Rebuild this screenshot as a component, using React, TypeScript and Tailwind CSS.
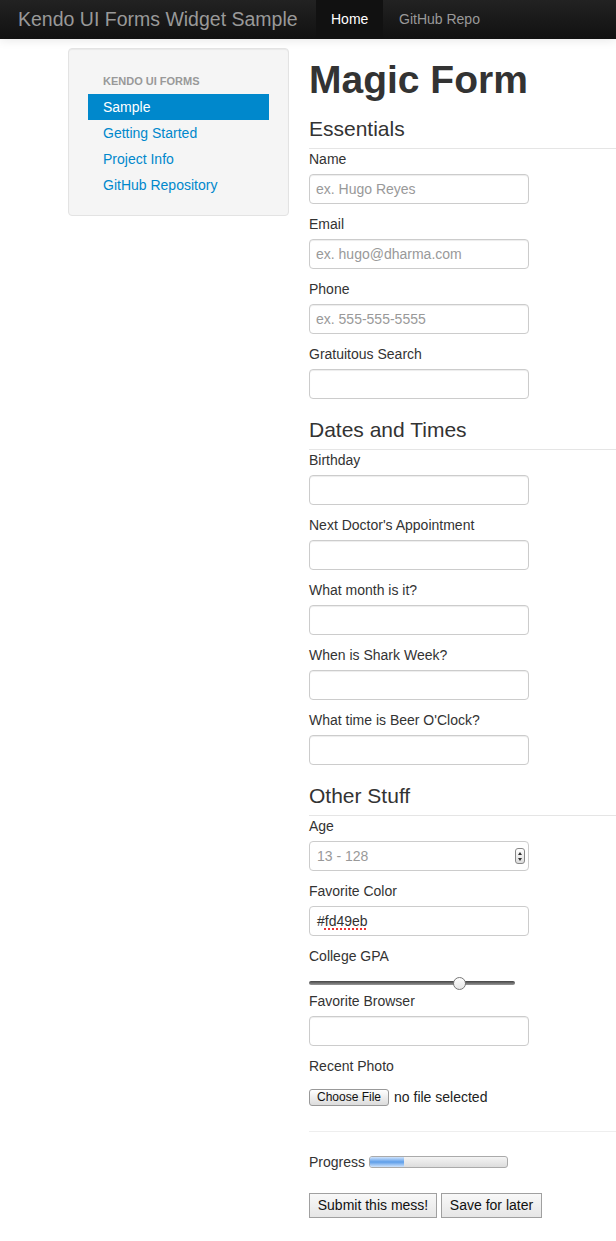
import React from 'react'

// Simple form field: label + bordered input box
function Field({ label, placeholder }: { label: string; placeholder?: string }) {
  return (
    <div className="mb-[10px]">
      <label className="block h-[20px] leading-[20px] mb-[5px] text-[14px] text-[#333]">{label}</label>
      <input
        type="text"
        placeholder={placeholder}
        className="block w-[220px] h-[30px] px-[6px] border border-[#ccc] rounded-[4px] bg-white text-[14px] text-[#555] placeholder:text-[#999] outline-none shadow-[inset_0_1px_1px_rgba(0,0,0,0.075)]"
      />
    </div>
  )
}

function Legend({ children }: { children: React.ReactNode }) {
  return (
    <div className="h-[41px] leading-[42px] text-[21px] text-[#333] border-b border-[#e5e5e5] overflow-hidden">
      {children}
    </div>
  )
}

export default function App() {
  const navItems = ['Getting Started', 'Project Info', 'GitHub Repository']

  return (
    <div className="min-h-[1241px] bg-white font-['Liberation_Sans',Arial,sans-serif] text-[#333] overflow-hidden">
      {/* Top navbar */}
      <div className="h-[39px] flex items-stretch bg-gradient-to-b from-[#222] to-[#111] shadow-[0_1px_10px_rgba(0,0,0,0.1)]">
        <div className="w-[316px] pl-[18px] flex items-center text-[19.5px] text-[#999] whitespace-nowrap">
          Kendo UI Forms Widget Sample
        </div>
        <div className="w-[67px] flex items-center pl-[15px] bg-[#111] text-[14px] text-white">Home</div>
        <div className="flex items-center pl-[16px] text-[14px] text-[#999]">GitHub Repo</div>
      </div>

      <div className="flex gap-[20px] pl-[68px] pt-[9px]">
        {/* Sidebar */}
        <div className="w-[221px] shrink-0 self-start bg-[#f5f5f5] border border-[#e3e3e3] rounded-[4px] pt-[19px] pb-[17px] px-[19px] shadow-[inset_0_1px_1px_rgba(0,0,0,0.05)]">
          <div className="h-[26px] leading-[26px] pl-[15px] text-[11px] font-bold uppercase text-[#999]">
            Kendo UI Forms
          </div>
          <div className="h-[26px] leading-[26px] pl-[15px] text-[14px] text-white bg-[#0088cc]">Sample</div>
          {navItems.map((item) => (
            <div key={item} className="h-[26px] leading-[26px] pl-[15px] text-[14px] text-[#0088cc]">
              {item}
            </div>
          ))}
        </div>

        {/* Main form */}
        <div className="flex-1 min-w-0">
          <h1 className="mt-[12px] mb-[8px] h-[40px] leading-[40px] text-[39px] font-bold text-[#333]">Magic Form</h1>

          <Legend>Essentials</Legend>
          <Field label="Name" placeholder="ex. Hugo Reyes" />
          <Field label="Email" placeholder="ex. hugo@dharma.com" />
          <Field label="Phone" placeholder="ex. 555-555-5555" />
          <Field label="Gratuitous Search" />

          <Legend>Dates and Times</Legend>
          <Field label="Birthday" />
          <Field label="Next Doctor's Appointment" />
          <Field label="What month is it?" />
          <Field label="When is Shark Week?" />
          <Field label="What time is Beer O'Clock?" />

          <Legend>Other Stuff</Legend>
          {/* Age with spinner */}
          <div className="mb-[10px]">
            <label className="block h-[20px] leading-[20px] mb-[5px] text-[14px]">Age</label>
            <div className="w-[220px] h-[30px] px-[7px] flex items-center justify-between border border-[#ccc] rounded-[4px] bg-white">
              <span className="text-[14px] text-[#999]">13 - 128</span>
              <div className="w-[10px] h-[16px] mr-[-4px] border border-[#888] rounded-[3px] bg-gradient-to-b from-white to-[#ddd] flex flex-col items-center justify-center gap-[3px]">
                <div className="w-0 h-0 border-l-[2px] border-r-[2px] border-b-[3px] border-l-transparent border-r-transparent border-b-[#333]" />
                <div className="w-0 h-0 border-l-[2px] border-r-[2px] border-t-[3px] border-l-transparent border-r-transparent border-t-[#333]" />
              </div>
            </div>
          </div>

          {/* Favorite color */}
          <div className="mb-[10px]">
            <label className="block h-[20px] leading-[20px] mb-[5px] text-[14px]">Favorite Color</label>
            <div className="w-[220px] h-[30px] px-[7px] flex items-center border border-[#ccc] rounded-[4px] bg-white text-[14px] text-[#333]">
              #<span className="underline decoration-dotted decoration-[#e33] decoration-[1.5px] underline-offset-[3px]">fd49eb</span>
            </div>
          </div>

          {/* GPA slider */}
          <div>
            <label className="block h-[20px] leading-[20px] mb-[5px] text-[14px]">College GPA</label>
            <div className="relative w-[206px] h-[20px]">
              <div className="absolute left-0 right-0 top-[10px] h-[4px] rounded-full bg-gradient-to-b from-[#444] to-[#999]" />
              <div className="absolute left-[144px] top-[6px] w-[13px] h-[13px] rounded-full border border-[#777] bg-gradient-to-b from-white to-[#e6e6e6]" />
            </div>
          </div>

          <Field label="Favorite Browser" />

          {/* File input */}
          <div>
            <label className="block h-[20px] leading-[20px] mb-[5px] text-[14px]">Recent Photo</label>
            <div className="h-[30px] pt-[2px] flex items-center gap-[5px]">
              <span className="h-[17px] px-[7px] flex items-center border border-[#999] rounded-[3px] bg-gradient-to-b from-white to-[#dcdcdc] text-[12px] text-[#111]">
                Choose File
              </span>
              <span className="text-[14px] text-[#222]">no file selected</span>
            </div>
          </div>

          <div className="mt-[20px] mb-[20px] border-t border-[#eee]" />

          {/* Progress */}
          <div className="h-[20px] flex items-center gap-[4px] text-[14px]">
            <span>Progress</span>
            <div className="w-[139px] h-[12px] border border-[#aaa] rounded-[3px] bg-gradient-to-b from-[#f4f4f4] to-[#ddd] overflow-hidden">
              <div className="w-[34px] h-full bg-gradient-to-b from-[#cfe3fb] via-[#5d9ee9] to-[#cfe3fb]" />
            </div>
          </div>

          {/* Buttons */}
          <div className="mt-[21px] flex gap-[4px]">
            <button className="h-[25px] w-[128px] border border-[#a0a0a0] bg-gradient-to-b from-[#f8f8f8] to-[#e6e6e6] text-[14px] text-[#111]">
              Submit this mess!
            </button>
            <button className="h-[25px] w-[101px] border border-[#a0a0a0] bg-gradient-to-b from-[#f8f8f8] to-[#e6e6e6] text-[14px] text-[#111]">
              Save for later
            </button>
          </div>
        </div>
      </div>
    </div>
  )
}
